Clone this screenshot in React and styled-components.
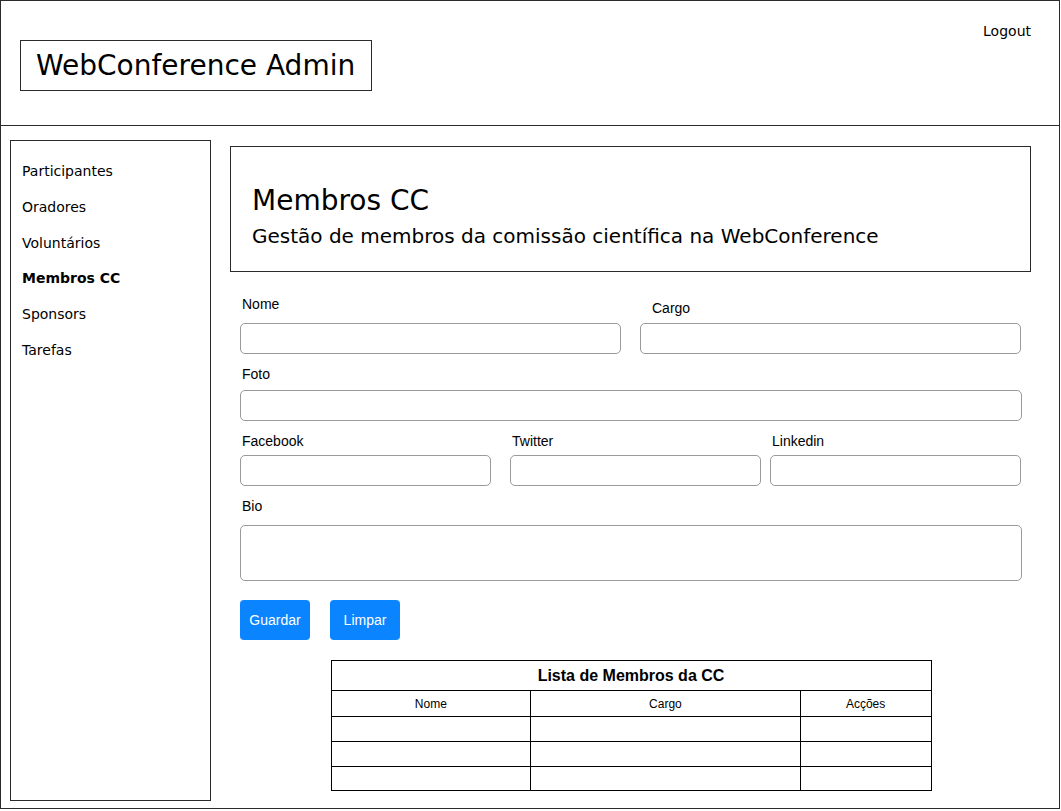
import React from "react";
import styled, { createGlobalStyle } from "styled-components";

const Global = createGlobalStyle`
  html, body { margin: 0; padding: 0; background: #fff; }
  * { box-sizing: border-box; }
`;

const sketch = `"DejaVu Sans", Verdana, sans-serif`;
const ui = `"Liberation Sans", Arial, Helvetica, sans-serif`;
const line = "#2b2b2b";

const Frame = styled.div`
  width: 1060px;
  height: 809px;
  border: 1px solid ${line};
  display: flex;
  flex-direction: column;
  font-family: ${sketch};
  color: #000;
`;

const Header = styled.header`
  height: 125px;
  flex: none;
  border-bottom: 1px solid ${line};
  display: flex;
  justify-content: space-between;
  align-items: flex-start;
  padding: 21px 28px 0 19px;
`;

const TitleBox = styled.div`
  margin-top: 18px;
  height: 51px;
  border: 1px solid ${line};
  display: flex;
  align-items: center;
  padding: 0 16px 0 15px;
  font-size: 28px;
  white-space: nowrap;
`;

const Logout = styled.a`
  font-size: 14px;
  line-height: 18px;
  color: #000;
  text-decoration: none;
`;

const Body = styled.div`
  flex: 1;
  display: flex;
  align-items: flex-start;
  padding: 14px 0 0 9px;
  gap: 19px;
`;

const Sidebar = styled.nav`
  width: 201px;
  height: 661px;
  border: 1px solid ${line};
  padding: 13px 0 0 11px;
  display: flex;
  flex-direction: column;
`;

const NavItem = styled.a`
  font-size: 14px;
  line-height: 35.8px;
  color: #000;
  text-decoration: none;
  font-weight: ${(p) => (p.$active ? 700 : 400)};
`;

const Main = styled.main`
  width: 801px;
  margin-top: 6px;
  display: flex;
  flex-direction: column;
`;

const PageHead = styled.section`
  height: 126px;
  border: 1px solid ${line};
  padding: 37px 0 0 21px;
`;

const PageTitle = styled.h1`
  margin: 0;
  font-size: 28px;
  font-weight: 400;
  line-height: 34px;
`;

const PageSub = styled.p`
  margin: 5px 0 0;
  font-size: 20px;
  line-height: 26px;
`;

const Form = styled.form`
  display: flex;
  flex-direction: column;
  padding: 23px 9px 0 10px;
  font-family: ${ui};
`;

const Row = styled.div`
  display: flex;
  margin-top: ${(p) => p.$mt || 0}px;
`;

const Field = styled.div`
  display: flex;
  flex-direction: column;
  width: ${(p) => (p.$w ? `${p.$w}px` : "100%")};
  margin-left: ${(p) => p.$ml || 0}px;
`;

const Label = styled.label`
  font-size: 14px;
  line-height: 18px;
  padding: ${(p) => (p.$shift ? "4px 0 0 12px" : "0 0 0 2px")};
  margin-bottom: ${(p) => (p.$shift ? p.$gap - 4 : p.$gap)}px;
  color: #000;
`;

const Input = styled.input`
  height: 31px;
  width: 100%;
  border: 1px solid #9a9a9a;
  border-radius: 5px;
  background: #fff;
  font-family: ${ui};
  outline: none;
`;

const TextArea = styled.textarea`
  height: 56px;
  width: 100%;
  border: 1px solid #9a9a9a;
  border-radius: 5px;
  resize: none;
  font-family: ${ui};
  outline: none;
`;

const Buttons = styled.div`
  display: flex;
  gap: 20px;
  margin-top: 19px;
`;

const Button = styled.button`
  width: 70px;
  height: 40px;
  border: none;
  border-radius: 4px;
  background: #0a84ff;
  color: #fff;
  font-family: ${ui};
  font-size: 14px;
  padding: 0;
`;

const Table = styled.table`
  margin: 20px auto 0;
  width: 601px;
  border-collapse: collapse;
  font-family: ${ui};
  border: 1px solid #000;
`;

const Caption = styled.th`
  height: 30px;
  border: 1px solid #000;
  font-size: 16px;
  font-weight: 700;
  text-align: center;
  padding: 0;
`;

const HeadCell = styled.th`
  height: 26px;
  border: 1px solid #000;
  font-size: 12px;
  font-weight: 400;
  text-align: center;
  padding: 0;
  width: ${(p) => p.$w}px;
`;

const Cell = styled.td`
  height: ${(p) => p.$h || 25}px;
  border: 1px solid #000;
  padding: 0;
`;

const nav = ["Participantes", "Oradores", "Voluntários", "Membros CC", "Sponsors", "Tarefas"];

export default function App() {
  return (
    <>
      <Global />
      <Frame>
        <Header>
          <TitleBox>WebConference Admin</TitleBox>
          <Logout href="#">Logout</Logout>
        </Header>
        <Body>
          <Sidebar>
            {nav.map((n) => (
              <NavItem key={n} href="#" $active={n === "Membros CC"}>
                {n}
              </NavItem>
            ))}
          </Sidebar>
          <Main>
            <PageHead>
              <PageTitle>Membros CC</PageTitle>
              <PageSub>Gestão de membros da comissão científica na WebConference</PageSub>
            </PageHead>
            <Form onSubmit={(e) => e.preventDefault()}>
              <Row>
                <Field $w={381}>
                  <Label $gap={10}>Nome</Label>
                  <Input />
                </Field>
                <Field $w={381} $ml={19}>
                  <Label $gap={10} $shift>Cargo</Label>
                  <Input />
                </Field>
              </Row>
              <Row $mt={11}>
                <Field>
                  <Label $gap={7}>Foto</Label>
                  <Input />
                </Field>
              </Row>
              <Row $mt={11}>
                <Field $w={251}>
                  <Label $gap={5}>Facebook</Label>
                  <Input />
                </Field>
                <Field $w={251} $ml={19}>
                  <Label $gap={5}>Twitter</Label>
                  <Input />
                </Field>
                <Field $w={251} $ml={9}>
                  <Label $gap={5}>Linkedin</Label>
                  <Input />
                </Field>
              </Row>
              <Row $mt={11}>
                <Field>
                  <Label $gap={10}>Bio</Label>
                  <TextArea />
                </Field>
              </Row>
              <Buttons>
                <Button type="submit">Guardar</Button>
                <Button type="reset">Limpar</Button>
              </Buttons>
              <Table>
                <thead>
                  <tr>
                    <Caption colSpan={3}>Lista de Membros da CC</Caption>
                  </tr>
                  <tr>
                    <HeadCell $w={200}>Nome</HeadCell>
                    <HeadCell $w={270}>Cargo</HeadCell>
                    <HeadCell $w={131}>Acções</HeadCell>
                  </tr>
                </thead>
                <tbody>
                  {[25, 25, 24].map((h, i) => (
                    <tr key={i}>
                      <Cell $h={h} />
                      <Cell $h={h} />
                      <Cell $h={h} />
                    </tr>
                  ))}
                </tbody>
              </Table>
            </Form>
          </Main>
        </Body>
      </Frame>
    </>
  );
}
